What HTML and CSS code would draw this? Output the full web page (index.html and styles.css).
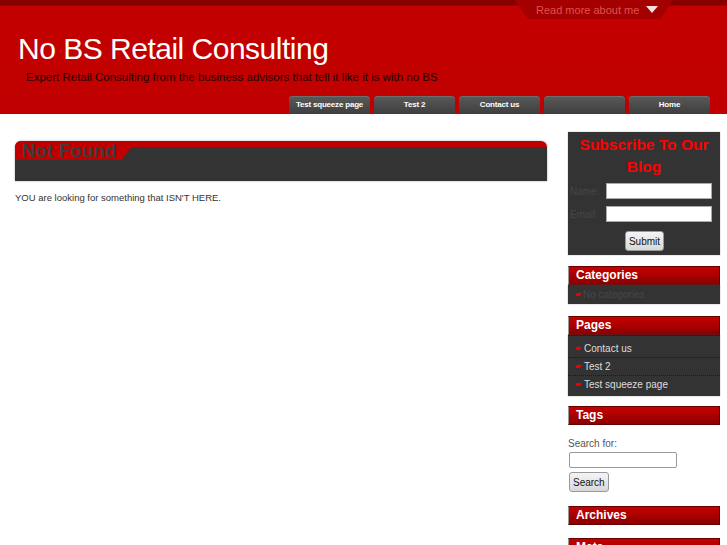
FILE: index.html
```html
<!DOCTYPE html>
<html>
<head>
<meta charset="utf-8">
<link rel="stylesheet" href="styles.css">
</head>
<body>
<header class="header">
  <div class="toprow">
    <a class="readmore">Read more about me <span class="tri"></span></a>
  </div>
  <h1 class="title">No BS Retail Consulting</h1>
  <p class="tagline">Expert Retail Consulting from the business advisors that tell it like it is with no BS</p>
  <nav class="tabs">
    <a class="tab">Test squeeze page</a>
    <a class="tab">Test 2</a>
    <a class="tab">Contact us</a>
    <a class="tab"></a>
    <a class="tab">Home</a>
  </nav>
</header>
<div class="wrap">
  <main class="main">
    <div class="postbox">
      <h2 class="posttitle">Not Found</h2>
    </div>
    <p class="posttext">YOU are looking for something that ISN'T HERE.</p>
  </main>
  <aside class="sidebar">
    <div class="subscribe">
      <h3 class="subtitle">Subscribe To Our Blog</h3>
      <div class="field"><label>Name:</label><input class="inp" type="text"></div>
      <div class="field"><label>Email:</label><input class="inp" type="text"></div>
      <div class="subrow"><button class="btn">Submit</button></div>
    </div>
    <div class="widget">
      <h3 class="whead">Categories</h3>
      <ul class="wlist cats">
        <li class="dim">No categories</li>
      </ul>
    </div>
    <div class="widget w-pages">
      <h3 class="whead">Pages</h3>
      <ul class="wlist pages">
        <li>Contact us</li>
        <li>Test 2</li>
        <li>Test squeeze page</li>
      </ul>
    </div>
    <div class="widget w-tags">
      <h3 class="whead">Tags</h3>
    </div>
    <div class="search">
      <label class="slabel">Search for:</label>
      <input class="sinp" type="text">
      <button class="btn">Search</button>
    </div>
    <div class="widget w-arch">
      <h3 class="whead">Archives</h3>
    </div>
    <div class="widget w-meta">
      <h3 class="whead">Meta</h3>
    </div>
  </aside>
</div>
</body>
</html>
```
FILE: styles.css
```css
html, body {
  margin: 0;
  padding: 0;
  background: #fff;
  font-family: "Liberation Sans", Arial, sans-serif;
  overflow: hidden;
  height: 545px;
}
.header {
  height: 114px;
  background: linear-gradient(#860000 0, #860000 5px, #c40000 6px, #c00000 100%);
}
.toprow {
  display: flex;
  justify-content: flex-end;
  height: 19px;
  padding-right: 54px;
}
.readmore {
  display: flex;
  align-items: center;
  gap: 7px;
  width: 158px;
  box-sizing: border-box;
  padding-left: 21px;
  height: 19px;
  background: #a40000;
  clip-path: polygon(0 0, 100% 0, 92% 100%, 8% 100%);
  color: #e05050;
  font-size: 11px;
}
.tri {
  width: 0;
  height: 0;
  border-left: 6px solid transparent;
  border-right: 6px solid transparent;
  border-top: 7px solid #f4dede;
}
.title {
  margin: 13px 0 0 18px;
  font-weight: normal;
  font-size: 30px;
  line-height: 34px;
  color: #fff;
  letter-spacing: -0.5px;
}
.tagline {
  margin: 4px 0 0 26px;
  font-size: 11.5px;
  line-height: 14px;
  color: #1e0000;
}
.tabs {
  display: flex;
  justify-content: flex-end;
  gap: 4px;
  padding-right: 17px;
  margin-top: 12px;
}
.tab {
  width: 81px;
  height: 18px;
  border-radius: 4px 4px 0 0;
  background: linear-gradient(#5a5a5a, #3e3e3e);
  box-shadow: inset 0 1px 0 #6e6e6e;
  color: #fff;
  font-size: 8px;
  letter-spacing: -0.2px;
  font-weight: bold;
  text-align: center;
  line-height: 18px;
}
.wrap {
  display: flex;
  gap: 21px;
  padding: 18px 7px 0 15px;
}
.main {
  width: 532px;
  padding-top: 9px;
}
.postbox {
  height: 40px;
  background: linear-gradient(#c00000 0, #c00000 6px, #333 6px);
  border-radius: 6px 6px 0 0;
  box-shadow: 0 0 2px #999;
}
.posttitle {
  margin: 0;
  display: inline-block;
  height: 19px;
  padding: 0 14px 0 7px;
  background: #c00000;
  border-top-left-radius: 6px;
  clip-path: polygon(0 0, 100% 0, 100% 35%, 92% 100%, 0 100%);
  color: #3c3c3c;
  font-size: 19px;
  line-height: 20px;
  font-weight: bold;
}
.posttext {
  margin: 11px 0 0;
  font-size: 9.5px;
  color: #333;
}
.sidebar {
  width: 152px;
}
.subscribe {
  background: #333;
  height: 123px;
  box-sizing: border-box;
  padding-top: 2px;
  box-shadow: 0 0 1px #888;
}
.subtitle {
  margin: 0 0 5px;
  color: #f00;
  text-align: center;
  font-size: 15.5px;
  line-height: 22px;
}
.field {
  display: flex;
  align-items: center;
  justify-content: space-between;
  padding: 0 8px 0 2px;
  margin-bottom: 7px;
}
.field label {
  color: #474747;
  font-size: 10px;
}
.inp {
  width: 106px;
  height: 16px;
  box-sizing: border-box;
  border: 1px solid #aaa;
  padding: 0;
  background: #fff;
}
.subrow {
  display: flex;
  justify-content: center;
  padding-left: 1px;
  padding-top: 2px;
}
.btn {
  font-family: "Liberation Sans", Arial, sans-serif;
  font-size: 10px;
  height: 20px;
  box-sizing: border-box;
  padding: 0 3px;
  border: 1px solid #999;
  border-radius: 3px;
  background: linear-gradient(#f5f5f5, #d8d8d8);
  color: #111;
}
.widget {
  margin-top: 11px;
}
.w-pages { margin-top: 12px; }
.w-tags { margin-top: 10px; }
.w-arch { margin-top: 14px; }
.w-meta { margin-top: 13px; }
.whead {
  margin: 0;
  height: 19px;
  box-sizing: border-box;
  padding-left: 7px;
  background: linear-gradient(#c80000, #8a0000);
  border: 1px solid #600;
  border-left-color: #999;
  color: #fff;
  font-size: 12px;
  line-height: 17px;
}
.wlist {
  list-style: none;
  margin: 0;
  background: #333;
  box-shadow: 0 0 1px #777;
}
.wlist.cats {
  padding: 0 0 1px;
}
.wlist.pages {
  padding: 4px 0 3px;
  box-shadow: inset 0 1px 0 #222, 0 0 1px #777;
}
.wlist li {
  position: relative;
  padding-left: 16px;
  height: 18px;
  box-sizing: border-box;
  line-height: 17px;
  font-size: 10px;
  color: #ddd;
  border-top: 1px dotted #1a1a1a;
}
.wlist li:first-child {
  border-top-color: transparent;
}
.wlist li.dim {
  color: #474747;
  padding-left: 15px;
}
.wlist li::before {
  content: "";
  position: absolute;
  left: 8px;
  top: 7px;
  width: 4px;
  height: 3px;
  background: #e00;
}
.wlist li::after {
  content: "";
  position: absolute;
  left: 11px;
  top: 6px;
  border-left: 3px solid #e00;
  border-top: 2.5px solid transparent;
  border-bottom: 2.5px solid transparent;
}
.search {
  display: flex;
  flex-direction: column;
  align-items: flex-start;
  padding-top: 13px;
}
.slabel {
  font-size: 10px;
  color: #555;
  margin-bottom: 3px;
}
.sinp {
  width: 108px;
  height: 16px;
  box-sizing: border-box;
  border: 1px solid #999;
  border-radius: 2px;
  margin: 0 0 4px 1px;
  padding: 0;
}
.search .btn {
  margin-left: 1px;
}
```
